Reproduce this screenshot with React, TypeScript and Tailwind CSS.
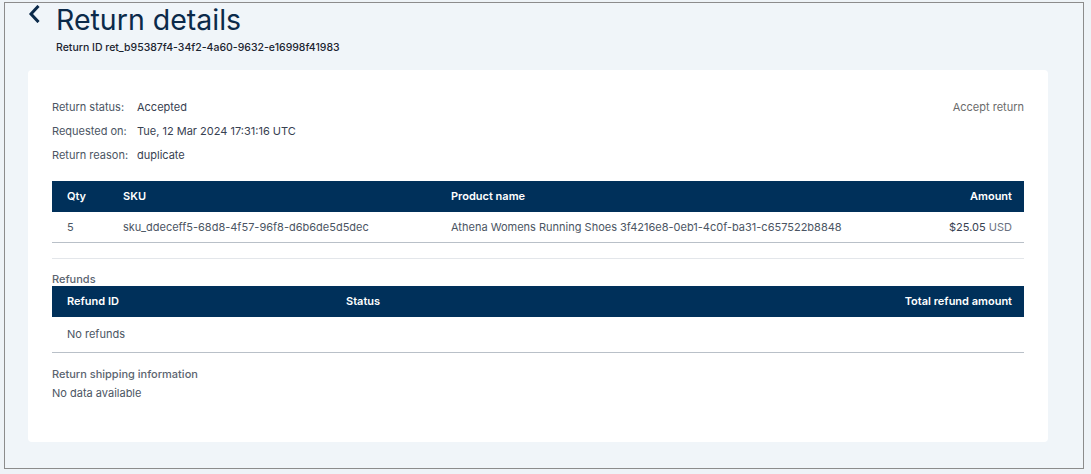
import React from "react";

const font = { fontFamily: "Inter, 'Open Sans', sans-serif" };

function ChevronLeft() {
  return (
    <svg width="12" height="18" viewBox="0 0 12 18" className="shrink-0">
      <path
        d="M9.5 2 L3 9 L9.5 16"
        fill="none"
        stroke="#0b2a4a"
        strokeWidth="3"
        strokeLinecap="square"
      />
    </svg>
  );
}

export default function App() {
  return (
    <div
      className="h-[474px] w-full bg-[#eef3f7] pl-[4px] pr-[7px] pt-[2px]"
      style={font}
    >
      <div className="flex h-[467px] flex-col border border-[#8c8c8c] bg-[#f0f5f9]">
        <header className="flex items-start pl-[23px]">
          <div className="mt-[2px]">
            <ChevronLeft />
          </div>
          <div className="ml-[16px]">
            <h1 className="text-[28.5px] leading-[34px] font-normal text-[#0b2a4a]">
              Return details
            </h1>
            <p className="mt-[5px] text-[10.5px] leading-[12px] font-medium text-[#1b2430]">
              Return ID ret_b95387f4-34f2-4a60-9632-e16998f41983
            </p>
          </div>
        </header>

        <main className="mt-[16px] ml-[23px] mr-[35px] h-[372px] rounded-[4px] bg-white px-6 pt-[25px]">
          <div className="flex justify-between text-[11px] leading-[24px]">
            <dl className="grid grid-cols-[85px_1fr]">
              <dt className="text-[#4b5563]">Return status:</dt>
              <dd className="text-[#374151]">Accepted</dd>
              <dt className="text-[#4b5563]">Requested on:</dt>
              <dd className="text-[#374151]">Tue, 12 Mar 2024 17:31:16 UTC</dd>
              <dt className="text-[#4b5563]">Return reason:</dt>
              <dd className="text-[#374151]">duplicate</dd>
            </dl>
            <button type="button" className="self-start text-[#6b6b6b]">
              Accept return
            </button>
          </div>

          <table className="mt-[14px] w-full text-[11px]">
            <thead>
              <tr className="h-[31px] bg-[#00305a] text-left font-semibold text-white">
                <th className="w-[71px] pl-[15px] font-semibold">Qty</th>
                <th className="w-[328px] font-semibold">SKU</th>
                <th className="font-semibold">Product name</th>
                <th className="pr-[12px] text-right font-semibold">Amount</th>
              </tr>
            </thead>
            <tbody>
              <tr className="h-[30px] border-b border-[#b9c0c8] text-[#4b5563]">
                <td className="pl-[15px]">5</td>
                <td>sku_ddeceff5-68d8-4f57-96f8-d6b6de5d5dec</td>
                <td>Athena Womens Running Shoes 3f4216e8-0eb1-4c0f-ba31-c657522b8848</td>
                <td className="pr-[12px] text-right">
                  <span className="text-[#374151]">$25.05</span>{" "}
                  <span className="text-[#6b7280]">USD</span>
                </td>
              </tr>
            </tbody>
          </table>

          <div className="mt-[15px] border-t border-[#e3e6ea]" />

          <h2 className="mt-[13px] text-[11px] leading-[14px] font-medium text-[#5b6470]">
            Refunds
          </h2>
          <table className="w-full text-[11px]">
            <thead>
              <tr className="h-[31px] bg-[#00305a] text-left text-white">
                <th className="w-[294px] pl-[15px] font-semibold">Refund ID</th>
                <th className="font-semibold">Status</th>
                <th className="pr-[12px] text-right font-semibold">Total refund amount</th>
              </tr>
            </thead>
            <tbody>
              <tr className="h-[36px] border-b border-[#b9c0c8] text-[#4b5563]">
                <td className="pl-[15px]" colSpan={3}>
                  No refunds
                </td>
              </tr>
            </tbody>
          </table>

          <h2 className="mt-[14px] text-[11px] leading-[14px] font-medium text-[#5b6470]">
            Return shipping information
          </h2>
          <p className="mt-[5px] text-[11px] leading-[14px] text-[#4b5563]">
            No data available
          </p>
        </main>
      </div>
    </div>
  );
}
